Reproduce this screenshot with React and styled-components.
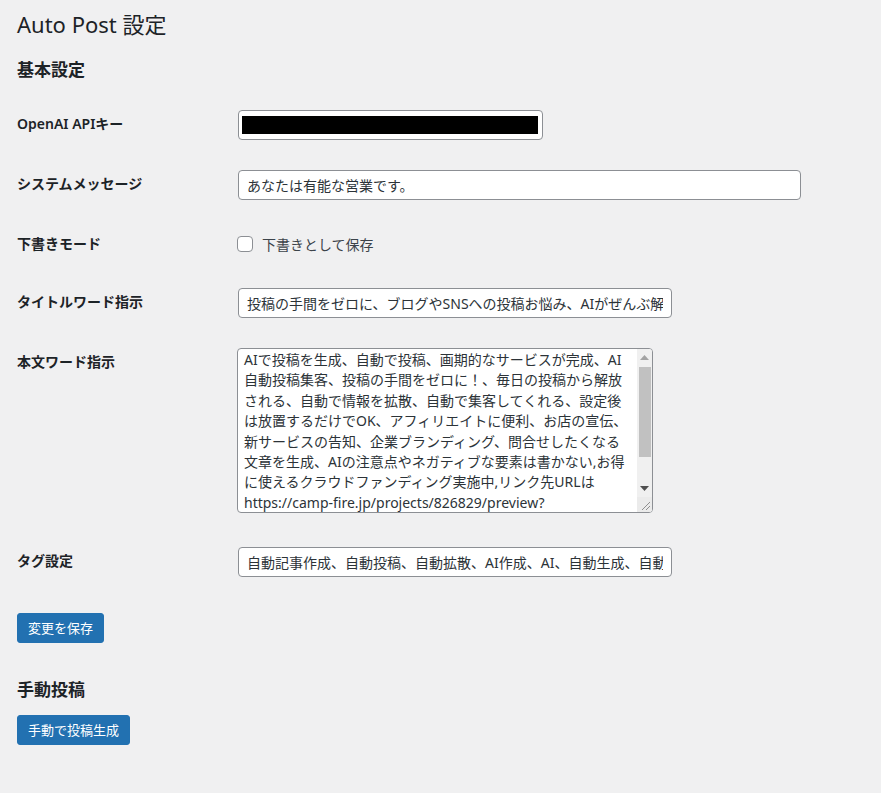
import React from 'react';
import styled, { createGlobalStyle } from 'styled-components';

const GlobalStyle = createGlobalStyle`
  html, body {
    margin: 0;
    padding: 0;
    background: #f0f0f1;
  }
  body {
    font-family: "Noto Sans", "Noto Sans CJK JP", sans-serif;
    color: #3c434a;
    font-size: 13px;
  }
`;

const Wrap = styled.div`
  min-height: 100vh;
  box-sizing: border-box;
  padding: 9px 0 40px 17px;
`;

const Title = styled.h1`
  margin: 0;
  font-size: 22px;
  font-weight: 400;
  line-height: 30px;
  color: #1d2327;
`;

const SectionTitle = styled.h2`
  margin: ${(p) => p.$top || 20}px 0 14px;
  font-size: 17px;
  font-weight: 700;
  line-height: 22px;
  color: #1d2327;
`;

const FormTable = styled.table`
  border-collapse: collapse;
  border-spacing: 0;
`;

const Label = styled.th`
  width: 200px;
  padding: 20px 10px 20px 0;
  text-align: left;
  vertical-align: top;
  font-size: 14px;
  font-weight: 600;
  line-height: 18px;
  color: #1d2327;
`;

const Cell = styled.td`
  padding: 15px 10px ${(p) => p.$bottom || 15}px;
  vertical-align: top;
`;

const TextInput = styled.input`
  box-sizing: border-box;
  display: block;
  width: ${(p) => p.$width}px;
  height: 30px;
  margin: 0 0 0 1px;
  padding: 0 8px;
  border: 1px solid #8c8f94;
  border-radius: 4px;
  background: #fff;
  font-family: "Noto Sans", "Noto Sans CJK JP", sans-serif;
  font-size: 14px;
  color: #2c3338;
  outline: none;
`;

const KeyField = styled.div`
  position: relative;
  width: 306px;
`;

const Redacted = styled.div`
  position: absolute;
  left: 5px;
  top: 6px;
  width: 296px;
  height: 18px;
  background: #000;
`;

const CheckLabel = styled.label`
  display: flex;
  align-items: center;
  gap: 9px;
  height: 28px;
  font-size: 14px;
  color: #3c434a;
`;

const CheckBox = styled.span`
  box-sizing: border-box;
  width: 16px;
  height: 16px;
  border: 1px solid #8c8f94;
  border-radius: 4px;
  background: #fff;
`;

const TextAreaBox = styled.div`
  box-sizing: border-box;
  display: flex;
  width: 416px;
  height: 165px;
  border: 1px solid #8c8f94;
  border-radius: 4px;
  background: #fff;
  overflow: hidden;
`;

const TextArea = styled.textarea`
  flex: 1;
  box-sizing: border-box;
  min-width: 0;
  margin: 0;
  padding: 1px 7px 2px 6px;
  border: none;
  background: transparent;
  font-family: "Noto Sans", "Noto Sans CJK JP", sans-serif;
  font-size: 14px;
  line-height: 20.4px;
  color: #2c3338;
  overflow: hidden;
  resize: none;
  outline: none;
`;

const ScrollBar = styled.div`
  display: flex;
  flex-direction: column;
  width: 15px;
  background: #f0f0f0;
`;

const ScrollButton = styled.div`
  display: flex;
  align-items: center;
  justify-content: center;
  height: 17px;
`;

const Track = styled.div`
  flex: 1;
  padding: 1px 1px 0 2px;
`;

const Thumb = styled.div`
  height: 90px;
  background: #c1c1c1;
`;

const Corner = styled.div`
  height: 15px;
  background: #ebebeb;
  display: flex;
  align-items: flex-end;
  justify-content: flex-end;
`;

const Arrow = ({ down }) => (
  <svg width="9" height="5" viewBox="0 0 9 5">
    {down ? (
      <path d="M0 0h9L4.5 5z" fill="#505050" />
    ) : (
      <path d="M0 5h9L4.5 0z" fill="#a3a3a3" />
    )}
  </svg>
);

const Grip = () => (
  <svg width="15" height="15" viewBox="0 0 15 15">
    <path d="M13 5L5 13M13 9L9 13" stroke="#8f8f8f" strokeWidth="1" />
  </svg>
);

const Button = styled.button`
  display: block;
  height: 30px;
  margin: ${(p) => p.$top || 0}px 0 0;
  padding: 0 10px;
  border: 1px solid #2271b1;
  border-radius: 3px;
  background: #2271b1;
  color: #fff;
  font-family: "Noto Sans", "Noto Sans CJK JP", sans-serif;
  font-size: 13px;
  line-height: 28px;
  cursor: pointer;
`;

const bodyText =
  'AIで投稿を生成、自動で投稿、画期的なサービスが完成、AI自動投稿集客、投稿の手間をゼロに！、毎日の投稿から解放される、自動で情報を拡散、自動で集客してくれる、設定後は放置するだけでOK、アフィリエイトに便利、お店の宣伝、新サービスの告知、企業ブランディング、問合せしたくなる文章を生成、AIの注意点やネガティブな要素は書かない,お得に使えるクラウドファンディング実施中,リンク先URLは\nhttps://camp-fire.jp/projects/826829/preview?';

export default function App() {
  return (
    <Wrap>
      <GlobalStyle />
      <Title>Auto Post 設定</Title>
      <SectionTitle>基本設定</SectionTitle>
      <FormTable>
        <tbody>
          <tr>
            <Label>OpenAI APIキー</Label>
            <Cell>
              <KeyField>
                <TextInput $width={305} type="text" defaultValue="" readOnly />
                <Redacted />
              </KeyField>
            </Cell>
          </tr>
          <tr>
            <Label>システムメッセージ</Label>
            <Cell>
              <TextInput $width={563} type="text" defaultValue="あなたは有能な営業です。" />
            </Cell>
          </tr>
          <tr>
            <Label>下書きモード</Label>
            <Cell>
              <CheckLabel>
                <CheckBox />
                下書きとして保存
              </CheckLabel>
            </Cell>
          </tr>
          <tr>
            <Label>タイトルワード指示</Label>
            <Cell>
              <TextInput
                $width={434}
                type="text"
                defaultValue="投稿の手間をゼロに、ブログやSNSへの投稿お悩み、AIがぜんぶ解決"
              />
            </Cell>
          </tr>
          <tr>
            <Label>本文ワード指示</Label>
            <Cell $bottom={19}>
              <TextAreaBox>
                <TextArea defaultValue={bodyText} />
                <ScrollBar>
                  <ScrollButton>
                    <Arrow />
                  </ScrollButton>
                  <Track>
                    <Thumb />
                  </Track>
                  <ScrollButton>
                    <Arrow down />
                  </ScrollButton>
                  <Corner>
                    <Grip />
                  </Corner>
                </ScrollBar>
              </TextAreaBox>
            </Cell>
          </tr>
          <tr>
            <Label>タグ設定</Label>
            <Cell>
              <TextInput
                $width={434}
                type="text"
                defaultValue="自動記事作成、自動投稿、自動拡散、AI作成、AI、自動生成、自動化"
              />
            </Cell>
          </tr>
        </tbody>
      </FormTable>
      <Button $top={21}>変更を保存</Button>
      <SectionTitle $top={36}>手動投稿</SectionTitle>
      <Button>手動で投稿生成</Button>
    </Wrap>
  );
}
